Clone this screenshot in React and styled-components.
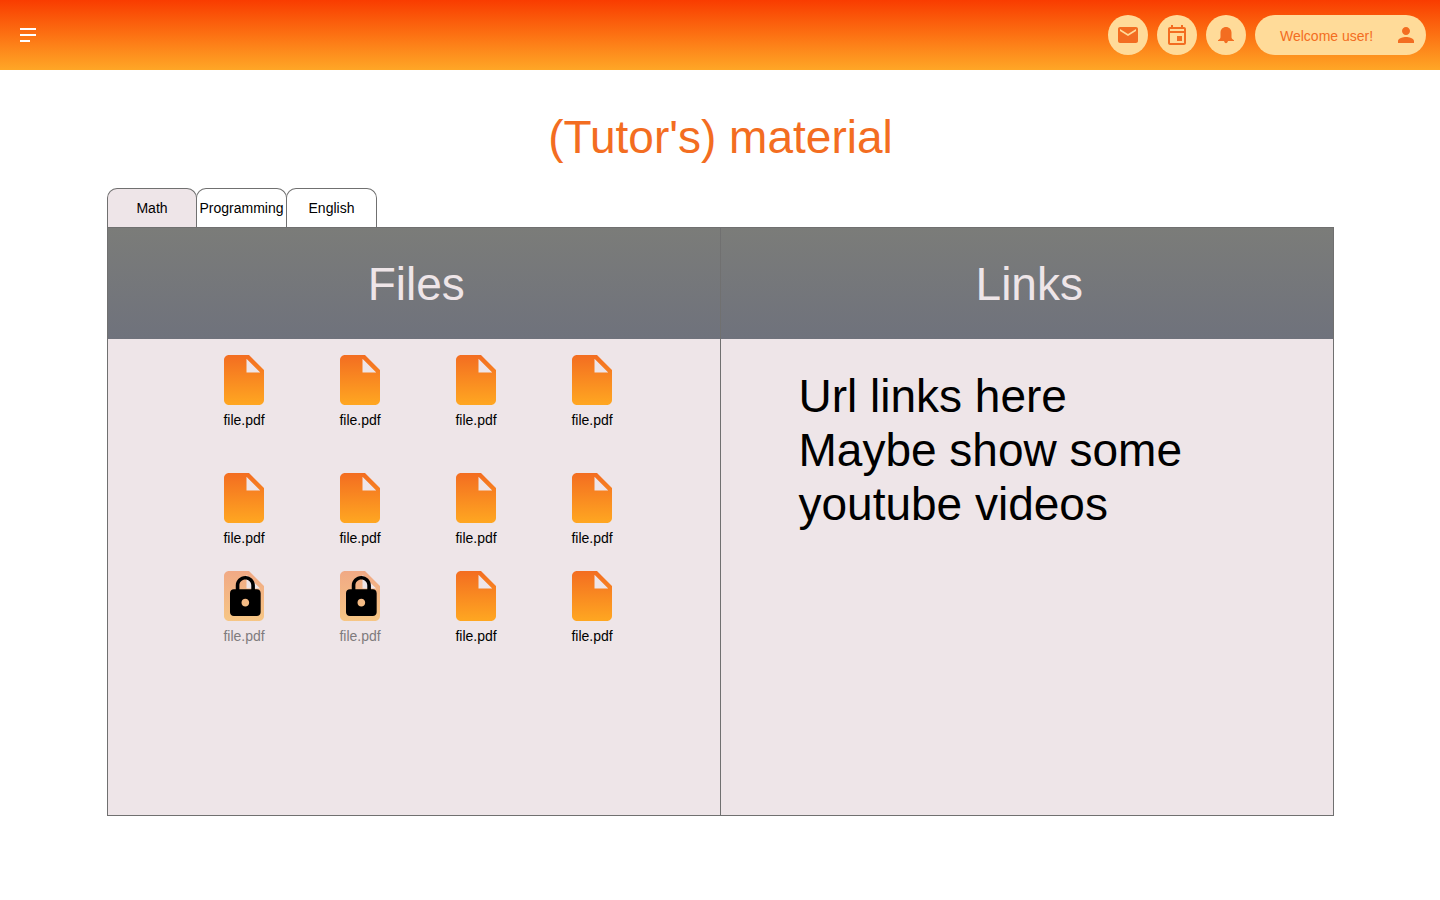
import React, { useState } from "react";
import styled, { createGlobalStyle, css } from "styled-components";

const GlobalStyle = createGlobalStyle`
  *, *::before, *::after { box-sizing: border-box; }
  body {
    margin: 0;
    background: #fff;
    color: #000;
    font-family: "Liberation Sans", Arial, sans-serif;
    font-size: 14px;
    line-height: 16px;
  }
  button { font: inherit; color: inherit; cursor: pointer; }
`;

const TopBar = styled.header`
  display: flex;
  align-items: center;
  justify-content: space-between;
  height: 70px;
  padding: 0 14px 0 16px;
  background: linear-gradient(#f93c00, #ffa726);
`;

const MenuButton = styled.button`
  display: flex;
  padding: 0;
  border: 0;
  background: none;
`;

const Actions = styled.nav`
  display: flex;
  gap: 9px;
`;

const pill = css`
  display: flex;
  align-items: center;
  height: 40px;
  padding: 0;
  border: 0;
  border-radius: 20px;
  background: #ffdb99;
  color: #f36d21;
`;

const RoundButton = styled.button`
  ${pill}
  justify-content: center;
  width: 40px;
`;

const UserButton = styled.button`
  ${pill}
  justify-content: space-between;
  width: 171px;
  padding: 2px 8px 0 25px;

  svg { margin-bottom: 2px; }
`;

const Icon = styled.svg`
  display: block;
  width: 24px;
  height: 24px;
  fill: currentColor;
`;

const Main = styled.main`
  padding: 40px 106px 84px 107px;
`;

const Title = styled.h1`
  margin: 0 0 24px;
  color: #f36d21;
  font-size: 46px;
  line-height: 54px;
  font-weight: 400;
  text-align: center;
`;

const Tabs = styled.div`
  display: flex;
`;

const Tab = styled.button`
  width: 91px;
  height: 39px;
  margin-left: -1px;
  padding: 0;
  border: 1px solid #707070;
  border-bottom: 0;
  border-radius: 10px 10px 0 0;
  background: ${(p) => (p.$active ? "#eee5e8" : "#fff")};
  white-space: nowrap;

  &:first-child {
    width: 90px;
    margin-left: 0;
  }
`;

const Board = styled.div`
  display: grid;
  grid-template-columns: 1fr 1fr;
  min-height: 589px;
  border: 1px solid #707070;
  background: #eee5e8;
`;

const Column = styled.section`
  &:first-child { border-right: 1px solid #707070; }
`;

const ColumnTitle = styled.h2`
  margin: 0;
  padding: 29px 0 28px 5px;
  background: linear-gradient(#7b7c79, #6f727c);
  color: #eee5e8;
  font-size: 46px;
  line-height: 54px;
  font-weight: 400;
  text-align: center;
`;

const FileGrid = styled.ul`
  display: grid;
  grid-template-columns: repeat(4, 116px);
  grid-template-rows: 118px 98px 98px;
  justify-content: start;
  margin: 0;
  padding: 16px 0 0 78px;
  list-style: none;
`;

const FileLink = styled.a`
  display: flex;
  flex-direction: column;
  align-items: center;
  gap: 7px;
  color: ${(p) => (p.$locked ? "#7f7b7d" : "#000")};
  text-decoration: none;
`;

const FileArt = styled.svg`
  display: block;
  width: 40px;
  height: 50px;
`;

const Note = styled.p`
  margin: 0;
  padding: 30px 70px 0 78px;
  font-size: 46px;
  line-height: 54px;
`;

const Defs = styled.svg`
  display: block;
  width: 0;
  height: 0;
`;

const FILES = Array.from({ length: 12 }, (_, i) => ({
  name: "file.pdf",
  locked: i === 8 || i === 9,
}));

const SUBJECTS = ["Math", "Programming", "English"];

function FileIcon({ locked }) {
  return (
    <FileArt viewBox="0 0 40 50" aria-hidden="true">
      <path
        transform="scale(2.5) translate(-4 -2)"
        fill="url(#fileFill)"
        opacity={locked ? 0.5 : 1}
        d="M6 2c-1.1 0-2 .9-2 2v16c0 1.1.9 2 2 2h12c1.1 0 2-.9 2-2V8l-6-6H6zm7 7V3.5L18.5 9H13z"
      />
      {locked && (
        <path
          transform="translate(6 5) scale(1.917 1.905) translate(-4 -1)"
          d="M18 8h-1V6c0-2.76-2.24-5-5-5S7 3.24 7 6v2H6c-1.1 0-2 .9-2 2v10c0 1.1.9 2 2 2h12c1.1 0 2-.9 2-2V10c0-1.1-.9-2-2-2zm-6 9c-1.1 0-2-.9-2-2s.9-2 2-2 2 .9 2 2-.9 2-2 2zm3.1-9H8.900V6c0-1.71 1.39-3.1 3.1-3.1s3.1 1.39 3.1 3.1v2z"
        />
      )}
    </FileArt>
  );
}

export default function App() {
  const [subject, setSubject] = useState("Math");

  return (
    <>
      <GlobalStyle />
      <Defs aria-hidden="true">
        <defs>
          <linearGradient id="fileFill" x1="0" y1="0" x2="0" y2="1">
            <stop offset="0" stopColor="#f36d21" />
            <stop offset="1" stopColor="#ffa721" />
          </linearGradient>
        </defs>
      </Defs>

      <TopBar>
        <MenuButton aria-label="Menu">
          <Icon viewBox="0 0 24 24">
            <path fill="#fff" d="M4 5h16v2H4zM4 11h16v2H4zM4 17h10v2H4z" />
          </Icon>
        </MenuButton>
        <Actions>
          <RoundButton aria-label="Messages">
            <Icon viewBox="0 0 24 24">
              <path d="M20 4H4c-1.1 0-2 .9-2 2v12c0 1.1.9 2 2 2h16c1.1 0 2-.9 2-2V6c0-1.1-.9-2-2-2zm0 4l-8 5-8-5V6l8 5 8-5v2z" />
            </Icon>
          </RoundButton>
          <RoundButton aria-label="Calendar">
            <Icon viewBox="0 0 24 24">
              <path
                fillRule="evenodd"
                d="M17 13h-5v5h5v-5zM16 2v2H8V2H6v2H5c-1.1 0-2 .9-2 2v14c0 1.1.9 2 2 2h14c1.1 0 2-.9 2-2V6c0-1.1-.9-2-2-2h-1V2h-2zM5 6h14v2H5zM5 10h14v10H5z"
              />
            </Icon>
          </RoundButton>
          <RoundButton aria-label="Notifications">
            <Icon viewBox="0 0 24 24">
              <path d="M12 4c3.200 0 5.500 2.400 5.500 5.600V14c0 1.300.7 2.200 2.500 3.200V18h-6.100c-.2 1.400-.9 2.200-1.900 2.200s-1.700-.8-1.900-2.200H4v-.8c1.800-1 2.500-1.900 2.500-3.200V9.600C6.500 6.400 8.800 4 12 4z" />
            </Icon>
          </RoundButton>
          <UserButton>
            Welcome user!
            <Icon viewBox="0 0 24 24" aria-hidden="true">
              <path d="M12 12c2.210 0 4-1.790 4-4s-1.790-4-4-4-4 1.790-4 4 1.790 4 4 4zm0 2c-2.670 0-8 1.340-8 4v2h16v-2c0-2.660-5.330-4-8-4z" />
            </Icon>
          </UserButton>
        </Actions>
      </TopBar>

      <Main>
        <Title>(Tutor's) material</Title>
        <Tabs role="tablist" aria-label="Subjects">
          {SUBJECTS.map((name) => (
            <Tab
              key={name}
              role="tab"
              aria-selected={name === subject}
              $active={name === subject}
              onClick={() => setSubject(name)}
            >
              {name}
            </Tab>
          ))}
        </Tabs>
        <Board>
          <Column>
            <ColumnTitle>Files</ColumnTitle>
            <FileGrid>
              {FILES.map((file, i) => (
                <li key={i}>
                  <FileLink href="#" $locked={file.locked} aria-disabled={file.locked}>
                    <FileIcon locked={file.locked} />
                    {file.name}
                  </FileLink>
                </li>
              ))}
            </FileGrid>
          </Column>
          <Column>
            <ColumnTitle>Links</ColumnTitle>
            <Note>
              Url links here
              <br />
              Maybe show some youtube videos
            </Note>
          </Column>
        </Board>
      </Main>
    </>
  );
}
